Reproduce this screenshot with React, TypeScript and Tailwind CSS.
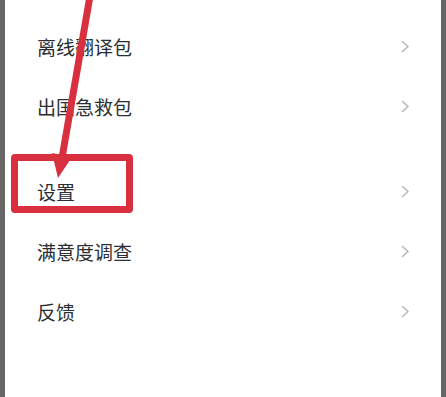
import React from "react";

const Chevron = () => (
  <svg width="9" height="13" viewBox="0 0 9 13" fill="none">
    <path d="M1.5 1.5 L7 6.5 L1.5 11.5" stroke="#b4b8bd" strokeWidth="1.6" strokeLinecap="round" strokeLinejoin="round" />
  </svg>
);

const Row = ({ label }: { label: string }) => (
  <div className="h-[60px] flex items-center justify-between pl-[32px] pr-[31px]">
    <span className="text-[19px] text-[#2b2f34] leading-none" style={{ fontFamily: '"Noto Sans CJK SC", "Noto Sans", sans-serif' }}>
      {label}
    </span>
    <Chevron />
  </div>
);

export default function App() {
  return (
    <div className="relative w-[446px] h-[397px] flex overflow-hidden bg-white">
      <div className="w-[5px] bg-[#666666]" />
      <div className="flex-1 bg-white pt-[16px] flex flex-col">
        <Row label="离线翻译包" />
        <Row label="出国急救包" />
        <div className="h-[25px]" />
        <Row label="设置" />
        <Row label="满意度调查" />
        <Row label="反馈" />
      </div>
      <div className="w-[5px] bg-[#666666]" />

      <div className="absolute left-[11px] top-[154px] w-[122px] h-[59px] border-[7px] border-[#d8303e] rounded-[4px]" />
      <svg className="absolute left-0 top-0" width="446" height="397" viewBox="0 0 446 397">
        <line x1="90" y1="-4" x2="62" y2="158" stroke="#d8303e" strokeWidth="7" />
        <polygon points="52,153 72,157 58,178" fill="#d8303e" />
      </svg>
    </div>
  );
}
